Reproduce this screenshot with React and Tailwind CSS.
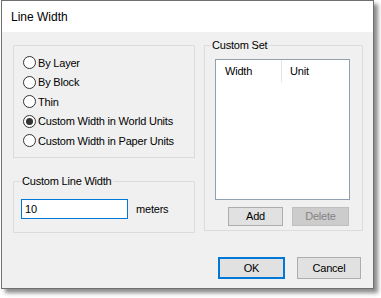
import { useState } from 'react';

const font = { fontFamily: '"Liberation Sans", Arial, sans-serif' };

function Radio({ label, checked, onChange }) {
  return (
    <label className="flex items-center h-[19.5px] cursor-default" onClick={onChange}>
      <span className="w-[13px] h-[13px] rounded-full border border-[#333] bg-white flex items-center justify-center shrink-0">
        {checked && <span className="w-[7px] h-[7px] rounded-full bg-[#333]" />}
      </span>
      <span className="ml-[2px] text-[11px] tracking-[-0.2px] text-black">{label}</span>
    </label>
  );
}

const options = [
  'By Layer',
  'By Block',
  'Thin',
  'Custom Width in World Units',
  'Custom Width in Paper Units',
];

export default function App() {
  const [mode, setMode] = useState(3);
  const [width, setWidth] = useState('10');

  return (
    <div className="w-[381px] h-[298px] bg-white overflow-hidden tracking-[-0.2px]" style={font}>
      <div className="ml-[1px] w-[373px] h-[289px] border border-[#6f6f6f] bg-[#f0f0f0] flex flex-col shadow-[4px_4px_4px_rgba(0,0,0,0.45)]">
        {/* title bar */}
        <div className="h-[31px] bg-white flex items-center pl-[9px] text-[12px] tracking-normal text-black shrink-0">
          Line Width
        </div>

        <div className="flex pl-[11px] pt-[5px] gap-[9px]">
          {/* left column */}
          <div className="w-[182px] flex flex-col pt-[8px]">
            <fieldset className="h-[113px] border border-[#dcdcdc] pl-[9px] pt-[7px]">
              {options.map((o, i) => (
                <Radio key={o} label={o} checked={mode === i} onChange={() => setMode(i)} />
              ))}
            </fieldset>

            <fieldset className="mt-[15px] h-[60px] border border-[#dcdcdc]">
              <legend className="ml-[7px] px-[1px] text-[11px] leading-[16px]">Custom Line Width</legend>
              <div className="flex items-center mt-[10px] pl-[7px]">
                <input
                  value={width}
                  onChange={e => setWidth(e.target.value)}
                  className="w-[107px] h-[20px] border border-[#0078d7] bg-white px-[3px] text-[11px] outline-none"
                  style={font}
                />
                <span className="ml-[8px] text-[11px]">meters</span>
              </div>
            </fieldset>
          </div>

          {/* right column */}
          <fieldset className="w-[159px] h-[194px] border border-[#dcdcdc]">
            <legend className="ml-[6px] px-[1px] text-[11px] leading-[16px]">Custom Set</legend>
            <div className="mt-[6px] ml-[10px] w-[135px] h-[141px] border border-[#8fa0b0] bg-white">
              <div className="flex h-[22px] text-[11px]">
                <div className="w-[66px] border-r border-[#e5e5e5] pl-[9px] flex items-center">Width</div>
                <div className="pl-[8px] flex items-center">Unit</div>
              </div>
            </div>
            <div className="flex mt-[7px] ml-[23px] gap-[9px]">
              <button className="w-[55px] h-[19px] border border-[#adadad] bg-[#e1e1e1] text-[11px]">Add</button>
              <button disabled className="w-[57px] h-[19px] border border-[#bfbfbf] bg-[#cccccc] text-[11px] text-[#838383]">Delete</button>
            </div>
          </fieldset>
        </div>

        <div className="flex justify-end gap-[12px] pr-[12px] mt-[24px]">
          <button className="w-[67px] h-[22px] border-2 border-[#0078d7] bg-[#e1e1e1] text-[11px]">OK</button>
          <button className="w-[64px] h-[22px] border border-[#adadad] bg-[#e1e1e1] text-[11px]">Cancel</button>
        </div>
      </div>
    </div>
  );
}
